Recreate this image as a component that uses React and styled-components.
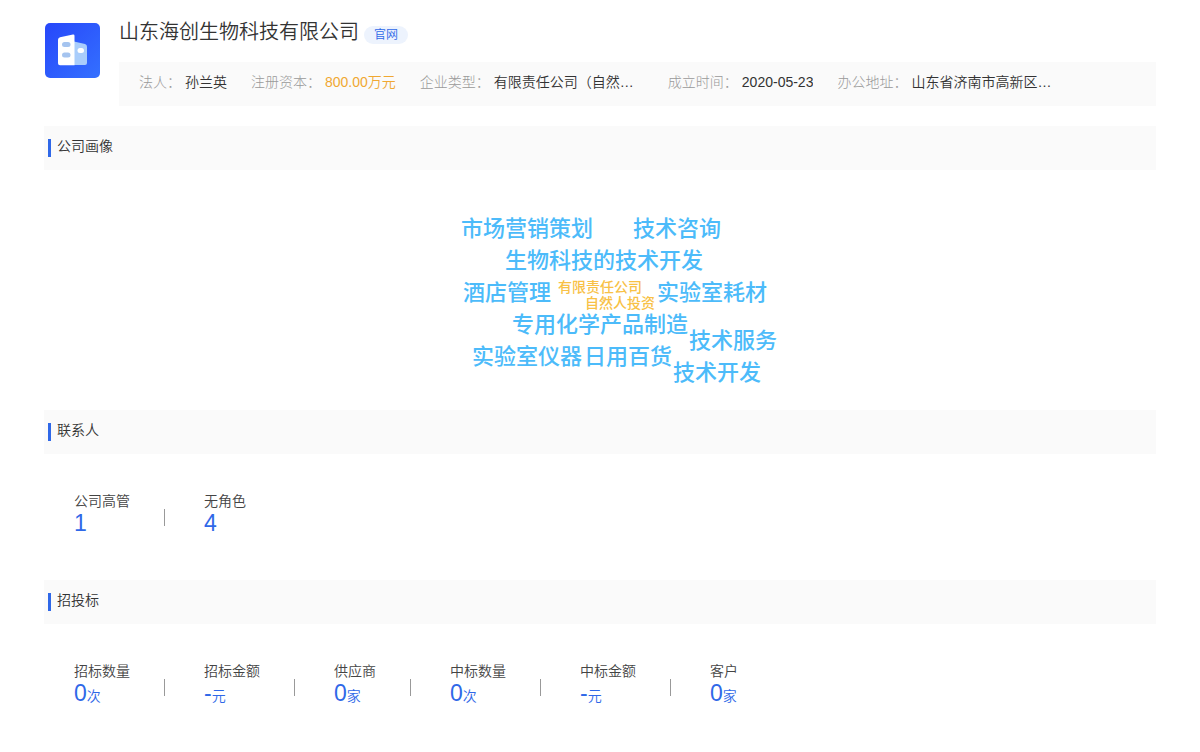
import React from 'react';
import styled, { createGlobalStyle } from 'styled-components';

const GlobalStyle = createGlobalStyle`
  * {
    box-sizing: border-box;
  }
  body {
    margin: 0;
    background: #fff;
    color: #444;
    font-family: "Liberation Sans", "Noto Sans CJK SC", sans-serif;
    font-size: 14px;
    font-weight: 350;
    line-height: 20px;
  }
`;

const Page = styled.main`
  padding: 20px 44px;
`;

const Header = styled.header`
  display: flex;
  gap: 19px;
  margin-bottom: 20px;
`;

const Logo = styled.svg`
  flex: none;
  width: 56px;
  height: 56px;
  margin-top: 2px;
`;

const HeaderBody = styled.div`
  flex: 1;
  min-width: 0;
`;

const TitleRow = styled.div`
  display: flex;
  align-items: flex-start;
  gap: 5px;
  height: 42px;
`;

const Title = styled.h1`
  margin: 0;
  font-size: 20px;
  line-height: 24px;
  font-weight: 350;
  color: #333;
`;

const SiteLink = styled.a`
  margin-top: 6px;
  padding: 0 10px;
  border-radius: 9px;
  background: #edf3fd;
  color: #2f68e8;
  font-size: 12px;
  line-height: 18px;
  text-decoration: none;
`;

const InfoBar = styled.dl`
  display: flex;
  gap: 24px;
  margin: 0;
  padding: 10px 20px 14px;
  background: #fafafa;
`;

const InfoItem = styled.div`
  display: flex;
  gap: 4px;
  white-space: nowrap;
`;

const InfoLabel = styled.dt`
  color: #999;
  font-weight: 300;
`;

const InfoValue = styled.dd`
  width: ${props => (props.$wide ? '150px' : 'auto')};
  margin: 0;
  overflow: hidden;
  text-overflow: ellipsis;
  color: ${props => (props.$highlight ? '#f0a832' : '#333')};
`;

const SectionTitle = styled.h2`
  display: flex;
  align-items: flex-start;
  gap: 6px;
  margin: 0;
  padding: 10px 4px 13px;
  background: #fafafa;
  font-size: 14px;
  line-height: 20px;
  font-weight: 350;
  color: #333;

  &::before {
    content: '';
    width: 3px;
    height: 18px;
    margin-top: 3px;
    background: #2f68e8;
  }
`;

const CloudArea = styled.div`
  display: flex;
  justify-content: center;
  padding: 40px 0;
`;

const Cloud = styled.div`
  position: relative;
  width: 320px;
  height: 160px;
`;

const Word = styled.span`
  position: absolute;
  left: ${props => props.$x}px;
  top: ${props => props.$y}px;
  white-space: nowrap;
  font-size: ${props => (props.$small ? 14 : 22)}px;
  line-height: ${props => (props.$small ? 16 : 32)}px;
  font-weight: 500;
  color: ${props => (props.$small ? '#f8c146' : '#4cbbfa')};
`;

const StatRow = styled.dl`
  display: flex;
  margin: 0;
  padding: 37px 30px 45px;
`;

const Stat = styled.div`
  display: flex;
  flex-direction: column;

  & + & {
    position: relative;
    margin-left: 34px;
    padding-left: 40px;
  }

  & + &::before {
    content: '';
    position: absolute;
    left: 0;
    top: 18px;
    width: 1px;
    height: 17px;
    background: #999;
  }
`;

const StatLabel = styled.dt`
  color: #444;
`;

const StatValue = styled.dd`
  margin: 0;
  color: #2f68e8;
  font-size: 23px;
  line-height: 24px;
`;

const Unit = styled.span`
  font-size: 14px;
`;

const info = [
  { label: '法人', value: '孙兰英' },
  { label: '注册资本', value: '800.00万元', highlight: true },
  { label: '企业类型', value: '有限责任公司（自然…', wide: true },
  { label: '成立时间', value: '2020-05-23' },
  { label: '办公地址', value: '山东省济南市高新区…', wide: true }
];

const words = [
  { text: '市场营销策划', x: 21, y: 3 },
  { text: '技术咨询', x: 193, y: 3 },
  { text: '生物科技的技术开发', x: 65, y: 35 },
  { text: '酒店管理', x: 23, y: 67 },
  { text: '有限责任公司', x: 118, y: 69, small: true },
  { text: '自然人投资', x: 145, y: 85, small: true },
  { text: '实验室耗材', x: 217, y: 67 },
  { text: '专用化学产品制造', x: 72, y: 99 },
  { text: '技术服务', x: 249, y: 115 },
  { text: '实验室仪器', x: 32, y: 131 },
  { text: '日用百货', x: 144, y: 131 },
  { text: '技术开发', x: 233, y: 147 }
];

const contacts = [
  { label: '公司高管', value: '1' },
  { label: '无角色', value: '4' }
];

const bids = [
  { label: '招标数量', value: '0', unit: '次' },
  { label: '招标金额', value: '-', unit: '元' },
  { label: '供应商', value: '0', unit: '家' },
  { label: '中标数量', value: '0', unit: '次' },
  { label: '中标金额', value: '-', unit: '元' },
  { label: '客户', value: '0', unit: '家' }
];

function CompanyLogo() {
  return (
    <Logo viewBox="0 0 56 56" aria-hidden="true">
      <defs>
        <linearGradient id="logoBg" x1="0" y1="0" x2="1" y2="1">
          <stop offset="0" stopColor="#2747fa" />
          <stop offset="1" stopColor="#3470ff" />
        </linearGradient>
      </defs>
      <rect x="1" y="1" width="55" height="55" rx="5" fill="url(#logoBg)" />
      <path d="M30 19.500l11 2.600q2 .5 2 2.500v16.500q0 2-2 2H30z" fill="#a9cdfb" />
      <path d="M16 15.300L29 12.500q1.500-.2 1.500 1.200V43.200H16q-2 0-2-2V17.800q0-2 2-2.500z" fill="#fff" />
      <rect x="18" y="20" width="8.500" height="5" rx="2.500" fill="#a5c4ef" />
      <rect x="18" y="30.500" width="8.500" height="5" rx="2.500" fill="#a5c4ef" />
      <rect x="33.500" y="26" width="6.500" height="5" rx="2.500" fill="#fff" />
    </Logo>
  );
}

function Stats({ items }) {
  return (
    <StatRow>
      {items.map(({ label, value, unit }) => (
        <Stat key={label}>
          <StatLabel>{label}</StatLabel>
          <StatValue>
            {value}
            {unit && <Unit>{unit}</Unit>}
          </StatValue>
        </Stat>
      ))}
    </StatRow>
  );
}

function App() {
  return (
    <Page>
      <GlobalStyle />
      <Header>
        <CompanyLogo />
        <HeaderBody>
          <TitleRow>
            <Title>山东海创生物科技有限公司</Title>
            <SiteLink href="#">官网</SiteLink>
          </TitleRow>
          <InfoBar>
            {info.map(({ label, value, highlight, wide }) => (
              <InfoItem key={label}>
                <InfoLabel>{label}：</InfoLabel>
                <InfoValue $highlight={highlight} $wide={wide}>{value}</InfoValue>
              </InfoItem>
            ))}
          </InfoBar>
        </HeaderBody>
      </Header>

      <section>
        <SectionTitle>公司画像</SectionTitle>
        <CloudArea>
          <Cloud>
            {words.map(({ text, x, y, small }) => (
              <Word key={text} $x={x} $y={y} $small={small}>{text}</Word>
            ))}
          </Cloud>
        </CloudArea>
      </section>

      <section>
        <SectionTitle>联系人</SectionTitle>
        <Stats items={contacts} />
      </section>

      <section>
        <SectionTitle>招投标</SectionTitle>
        <Stats items={bids} />
      </section>
    </Page>
  );
}

export default App;
